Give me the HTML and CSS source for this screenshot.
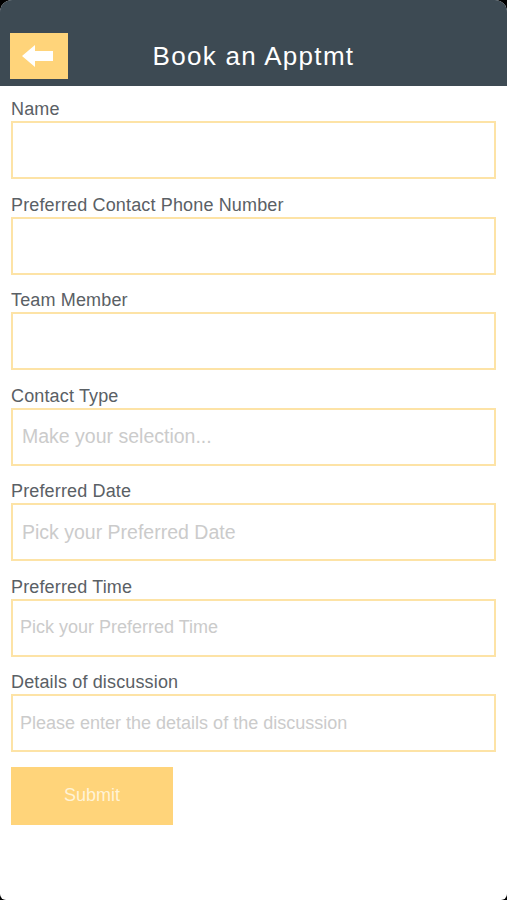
FILE: index.html
```html
<!DOCTYPE html>
<html>
<head>
<meta charset="utf-8">
<link rel="stylesheet" href="styles.css">
</head>
<body>
<div class="app">
  <header class="topbar">
    <button class="back" aria-label="Back">
      <svg width="32" height="24" viewBox="0 0 32 24"><path d="M0 12 L13 1 L13 7 L31 7 L31 17 L13 17 L13 23 Z" fill="#fff"/></svg>
    </button>
    <h1 class="title">Book an Apptmt</h1>
  </header>
  <form class="form">
    <div class="field"><label class="label">Name</label><div class="input"></div></div>
    <div class="field"><label class="label">Preferred Contact Phone Number</label><div class="input"></div></div>
    <div class="field"><label class="label">Team Member</label><div class="input"></div></div>
    <div class="field"><label class="label">Contact Type</label><div class="input ph ph-a">Make your selection...</div></div>
    <div class="field"><label class="label">Preferred Date</label><div class="input ph ph-a">Pick your Preferred Date</div></div>
    <div class="field"><label class="label">Preferred Time</label><div class="input ph">Pick your Preferred Time</div></div>
    <div class="field"><label class="label">Details of discussion</label><div class="input ph">Please enter the details of the discussion</div></div>
    <div class="submit">Submit</div>
  </form>
</div>
</body>
</html>
```
FILE: styles.css
```css
html, body {
  margin: 0;
  padding: 0;
  background: #000;
}
body {
  font-family: "Liberation Sans", Arial, sans-serif;
}
.app {
  width: 507px;
  height: 900px;
  background: #fff;
  border-radius: 12px 12px 6px 6px;
  overflow: hidden;
}
.topbar {
  height: 86px;
  background: #3d4a53;
  display: flex;
  align-items: flex-end;
  position: relative;
  box-sizing: border-box;
  padding: 0 0 7px 10px;
}
.back {
  width: 58px;
  height: 46px;
  background: #ffd47a;
  border: none;
  padding: 0;
  display: flex;
  align-items: center;
  justify-content: center;
}
.back svg { margin-right: 3px; }
.title {
  position: absolute;
  left: 0;
  right: 0;
  top: 40px;
  margin: 0;
  text-align: center;
  color: #fff;
  font-weight: normal;
  font-size: 26px;
  letter-spacing: 1.3px;
  line-height: 32px;
}
.form {
  padding: 13px 11px 0 11px;
  display: flex;
  flex-direction: column;
}
.field {
  display: flex;
  flex-direction: column;
  margin-bottom: 15.5px;
}
.label {
  font-size: 18px;
  letter-spacing: 0.15px;
  line-height: 21px;
  color: #5a6065;
  margin-bottom: 1px;
}
.input {
  height: 58px;
  box-sizing: border-box;
  border: 2px solid #fde3a6;
  display: flex;
  align-items: center;
  padding-left: 7px;
  font-size: 18px;
  color: #cbcbcb;
}
.ph-a {
  padding-left: 9px;
  font-size: 19.5px;
}
.submit {
  width: 162px;
  height: 58px;
  margin-top: -1px;
  background: #ffd47a;
  color: #fff3d6;
  font-size: 18px;
  display: flex;
  align-items: center;
  justify-content: center;
}
```
